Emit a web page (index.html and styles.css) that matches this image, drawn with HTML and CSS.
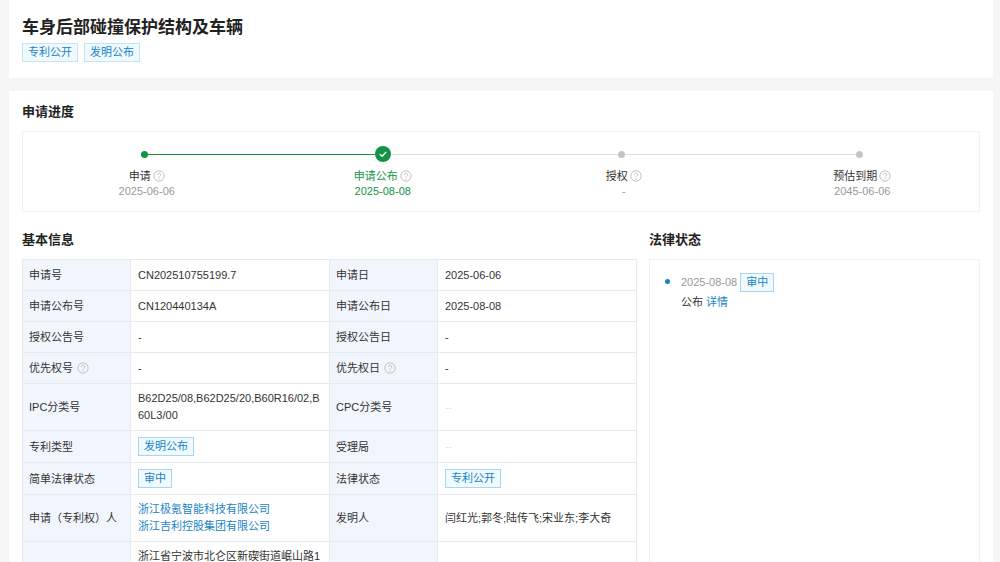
FILE: index.html
```html
<!DOCTYPE html>
<html lang="zh-CN">
<head>
    <meta charset="UTF-8">
    <meta name="viewport" content="width=device-width, initial-scale=1.0">
    <title>车身后部碰撞保护结构及车辆</title>
    <link rel="stylesheet" href="styles.css">
</head>
<body>
    <svg class="sprite" aria-hidden="true">
        <symbol id="help" viewBox="0 0 12 12">
            <circle cx="6" cy="6" r="5.2" fill="none" stroke="currentColor" stroke-width="0.9"/>
            <path d="M4.3 4.9C4.3 2.6 7.8 2.7 7.7 4.8C7.6 6 6 5.9 6 7.4" fill="none" stroke="currentColor" stroke-width="0.9"/>
            <circle cx="6" cy="8.9" r="0.6" fill="currentColor"/>
        </symbol>
    </svg>

    <header class="panel page-header">
        <h1>车身后部碰撞保护结构及车辆</h1>
        <div class="tags">
            <span class="tag tag-light">专利公开</span>
            <span class="tag tag-light">发明公布</span>
        </div>
    </header>

    <main class="panel content">
        <section>
            <h2>申请进度</h2>
            <ol class="steps">
                <li class="step done">
                    <div class="track"><span class="dot"></span></div>
                    <div class="step-name">申请<svg class="help"><use href="#help"/></svg></div>
                    <div class="step-date">2025-06-06</div>
                </li>
                <li class="step current">
                    <div class="track">
                        <svg class="check" viewBox="0 0 16 16">
                            <circle cx="8" cy="8" r="8" fill="#129447"/>
                            <path d="M4.8 8.2L7.1 10.3L11.2 6" fill="none" stroke="#fff" stroke-width="1.4"/>
                        </svg>
                    </div>
                    <div class="step-name">申请公布<svg class="help"><use href="#help"/></svg></div>
                    <div class="step-date">2025-08-08</div>
                </li>
                <li class="step">
                    <div class="track"><span class="dot"></span></div>
                    <div class="step-name">授权<svg class="help"><use href="#help"/></svg></div>
                    <div class="step-date">-</div>
                </li>
                <li class="step">
                    <div class="track"><span class="dot"></span></div>
                    <div class="step-name">预估到期<svg class="help"><use href="#help"/></svg></div>
                    <div class="step-date">2045-06-06</div>
                </li>
            </ol>
        </section>

        <div class="columns">
            <section class="basic">
                <h2>基本信息</h2>
                <table class="info">
                    <tr>
                        <th>申请号</th><td>CN202510755199.7</td>
                        <th>申请日</th><td>2025-06-06</td>
                    </tr>
                    <tr>
                        <th>申请公布号</th><td>CN120440134A</td>
                        <th>申请公布日</th><td>2025-08-08</td>
                    </tr>
                    <tr>
                        <th>授权公告号</th><td>-</td>
                        <th>授权公告日</th><td>-</td>
                    </tr>
                    <tr>
                        <th>优先权号<svg class="help"><use href="#help"/></svg></th><td>-</td>
                        <th>优先权日<svg class="help"><use href="#help"/></svg></th><td>-</td>
                    </tr>
                    <tr>
                        <th>IPC分类号</th><td>B62D25/08,B62D25/20,B60R16/02,B60L3/00</td>
                        <th>CPC分类号</th><td class="empty">--</td>
                    </tr>
                    <tr>
                        <th>专利类型</th><td><span class="tag">发明公布</span></td>
                        <th>受理局</th><td class="empty">--</td>
                    </tr>
                    <tr>
                        <th>简单法律状态</th><td><span class="tag">审中</span></td>
                        <th>法律状态</th><td><span class="tag">专利公开</span></td>
                    </tr>
                    <tr>
                        <th>申请（专利权）人</th>
                        <td><a href="#">浙江极氪智能科技有限公司</a><br><a href="#">浙江吉利控股集团有限公司</a></td>
                        <th>发明人</th><td>闫红光;郭冬;陆传飞;宋业东;李大奇</td>
                    </tr>
                    <tr class="address">
                        <th></th><td>浙江省宁波市北仑区新碶街道岷山路1</td>
                        <th></th><td></td>
                    </tr>
                </table>
            </section>

            <section class="legal">
                <h2>法律状态</h2>
                <ul class="timeline">
                    <li>
                        <div><time>2025-08-08</time> <span class="tag">审中</span></div>
                        <div>公布 <a href="#">详情</a></div>
                    </li>
                </ul>
            </section>
        </div>
    </main>
</body>
</html>
```

FILE: styles.css
```css
* {
    box-sizing: border-box;
}
body {
    margin: 0;
    padding: 0 7px 0 9px;
    background-color: #f5f5f5;
    color: #333;
    font-family: "Liberation Sans", "Noto Sans CJK SC", sans-serif;
    font-size: 11px;
    line-height: 18px;
}
h1, h2, ol, ul {
    margin: 0;
    padding: 0;
}
a {
    color: #1683c4;
    text-decoration: none;
}
.sprite {
    display: none;
}
.panel {
    background-color: #fff;
    padding: 0 13px;
}

/* header */
.page-header {
    padding-top: 15px;
    padding-bottom: 16px;
    margin-bottom: 13px;
}
h1 {
    color: #222;
    font-size: 17px;
    line-height: 26px;
}
.tags {
    display: flex;
    gap: 6px;
    margin-top: 2px;
}
.tag {
    display: inline-block;
    padding: 0 5px;
    border: 1px solid #a9d5ee;
    background-color: #effaff;
    color: #1683c4;
    line-height: 17px;
}
.tag-light {
    border-color: #c5e3f3;
}

/* progress */
.content {
    padding-top: 9px;
}
h2 {
    color: #222;
    font-size: 13px;
    line-height: 24px;
    margin-bottom: 7px;
}
.steps {
    display: flex;
    list-style: none;
    padding: 14px 0 12px 2px;
    border: 1px solid #f0f0f0;
}
.step {
    flex: 1;
    text-align: center;
}
.track {
    display: flex;
    align-items: center;
    height: 16px;
    margin-bottom: 7px;
}
.track::before,
.track::after {
    content: "";
    flex: 1;
    height: 1px;
    background-color: #ddd;
}
.step:first-child .track::before,
.step:last-child .track::after {
    background-color: transparent;
}
.done .track::after,
.current .track::before {
    background-color: #129447;
}
.dot {
    width: 7px;
    height: 7px;
    border-radius: 50%;
    background-color: #c4c4c6;
}
.done .dot {
    background-color: #129447;
}
.check {
    width: 16px;
    height: 16px;
}
.step-name,
.step-date {
    padding-left: 5px;
    line-height: 15px;
}
.step-date {
    color: #999;
}
.current .step-name,
.current .step-date {
    padding-left: 0;
    color: #129447;
}
.help {
    width: 12px;
    height: 12px;
    margin-left: 2px;
    color: #bbb;
    vertical-align: -2px;
}

/* details */
.columns {
    display: flex;
    gap: 12px;
    margin-top: 16px;
}
.basic {
    flex: 13;
    min-width: 0;
}
.legal {
    display: flex;
    flex-direction: column;
    flex: 7;
}
.info {
    width: 100%;
    border-collapse: collapse;
    table-layout: fixed;
}
.info th,
.info td {
    padding: 6px 7px;
    border: 1px solid #e6ebef;
    text-align: left;
    font-weight: normal;
    word-break: break-all;
}
.info th {
    width: 108px;
    padding-left: 6px;
    background-color: #f1f6fd;
}
.info td {
    line-height: 17px;
}
.info .help {
    margin-left: 4px;
}
.info .empty {
    color: #e6e6e6;
}
.address {
    height: 66px;
    vertical-align: top;
}
.timeline {
    flex: 1;
    list-style: none;
    padding: 12px 14px;
    border: 1px solid #f0f0f0;
}
.timeline li {
    position: relative;
    padding-left: 17px;
    line-height: 20px;
}
.timeline li::before {
    content: "";
    position: absolute;
    top: 7px;
    left: 1px;
    width: 5px;
    height: 5px;
    border-radius: 50%;
    background-color: #1683c4;
}
.timeline time {
    color: #999;
}
```
